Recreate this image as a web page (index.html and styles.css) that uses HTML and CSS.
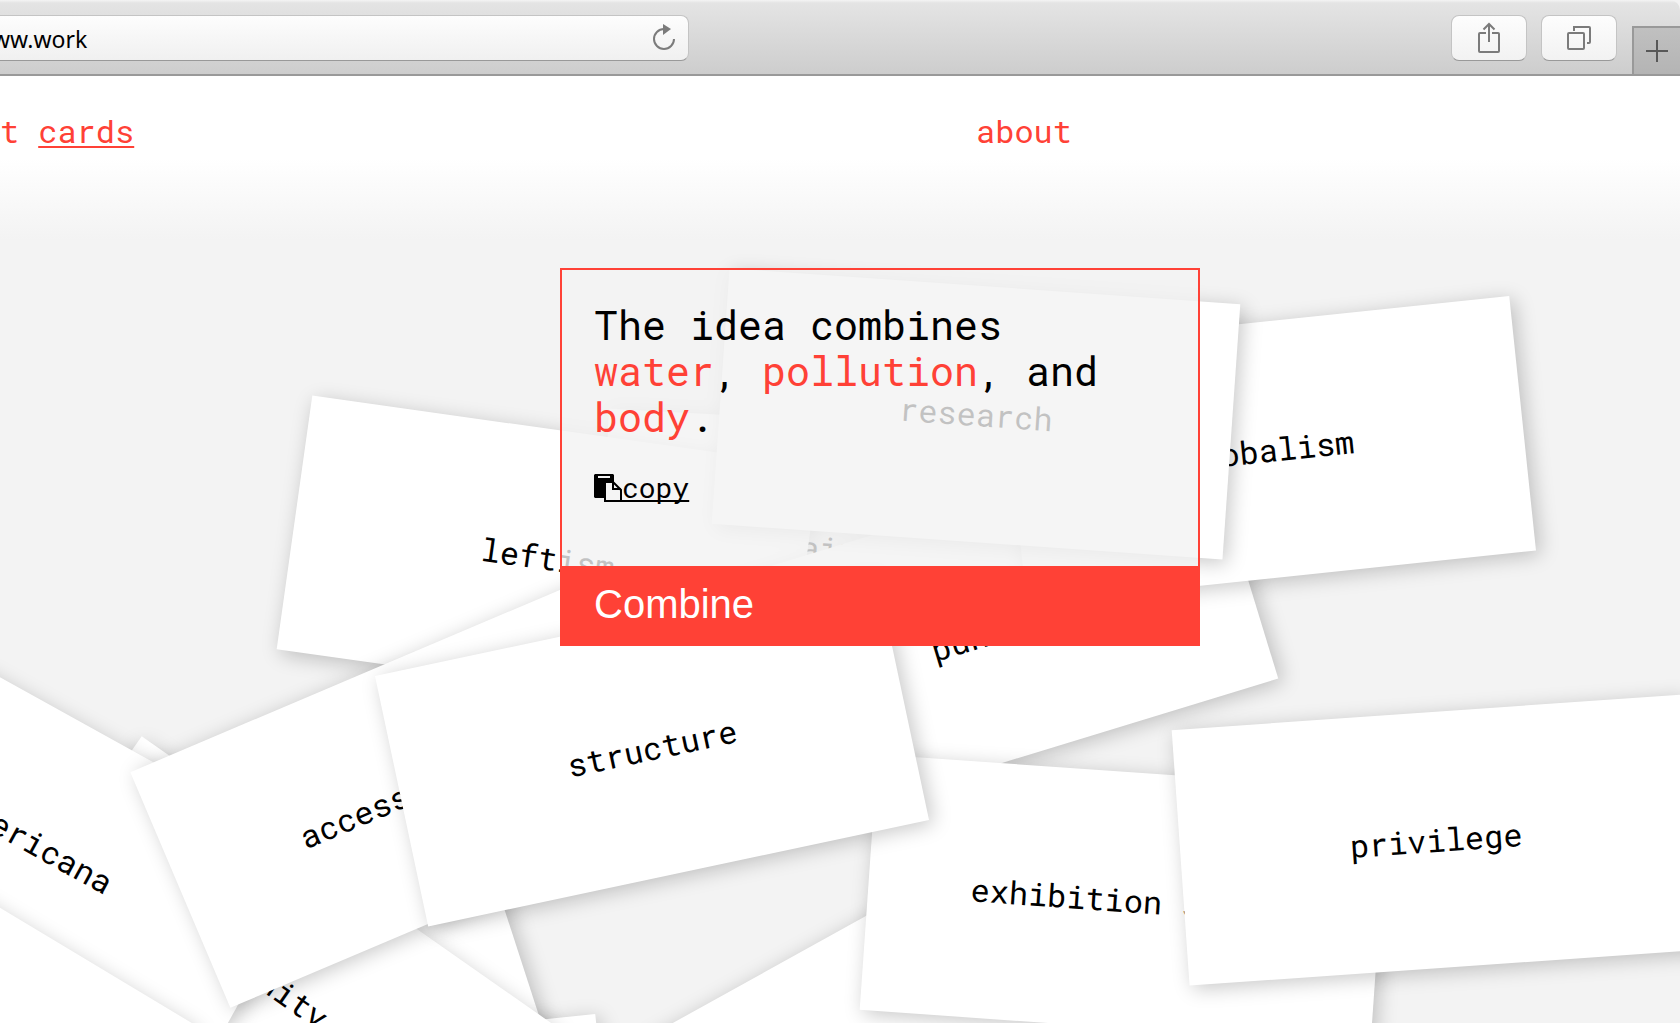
FILE: index.html
```html
<!DOCTYPE html>
<html lang="en">
<head>
<meta charset="utf-8">
<title>Cards</title>
<meta name="viewport" content="width=device-width, initial-scale=1">
<link rel="stylesheet" href="styles.css">
</head>
<body>
<div class="toolbar">
  <div class="address">
    <input class="address-input" type="text" value="ww.work" aria-label="Address">
    <button class="reload" type="button" aria-label="Reload">
      <svg width="24" height="28" viewBox="0 0 24 28" fill="none" stroke="#7b7b7b" stroke-width="2"><path d="M12 5A10 10 0 1 0 22 15"/><path d="M11 0V11L19 5Z" fill="#7b7b7b" stroke="none"/></svg>
    </button>
  </div>
  <div class="tools">
    <button class="tool" type="button" aria-label="Share">
      <svg width="24" height="32" viewBox="0 0 24 32" fill="none" stroke="#7b7b7b" stroke-width="2"><path d="M9 11H3Q2 11 2 12V29Q2 30 3 30H21Q22 30 22 29V12Q22 11 21 11H15"/><path d="M12 20V2M6.500 7.500L12 2L17.500 7.500"/></svg>
    </button>
    <button class="tool" type="button" aria-label="Show all tabs">
      <svg width="26" height="26" viewBox="0 0 26 26" fill="none" stroke="#7b7b7b" stroke-width="2"><rect x="2" y="8" width="16" height="16" rx="1"/><path d="M8 6V2H23Q24 2 24 3V17Q24 18 23 18H21"/></svg>
    </button>
  </div>
  <button class="new-tab" type="button" aria-label="New tab">
    <svg width="22" height="22" viewBox="0 0 22 22" stroke="#585858" stroke-width="2"><path d="M11 0V22M0 11H22"/></svg>
  </button>
</div>
<header class="site-header">
  <nav class="nav">
    <a class="nav-link" href="#print">t</a>
    <a class="nav-link nav-link-current" href="#cards">cards</a>
  </nav>
  <nav class="nav">
    <a class="nav-link" href="#about">about</a>
  </nav>
</header>
<main class="board">
  <div class="card card-painting">painting</div>
  <div class="card card-leftism">leftism</div>
  <div class="card card-blank-left"></div>
  <div class="card card-blank-bottom"></div>
  <div class="card card-vanity">vanity</div>
  <div class="card card-americana">Americana</div>
  <div class="card card-blank-corner"></div>
  <div class="card card-blank-right"></div>
  <div class="card card-punctum">punctum</div>
  <div class="card card-globalism">globalism</div>
  <div class="card card-research">research</div>
  <div class="card card-accessibility">accessibility</div>
  <div class="card card-exhibition">exhibition space</div>
  <div class="card card-structure">structure</div>
  <div class="card card-privilege">privilege</div>
  <section class="panel">
    <div class="panel-body">
      <p class="idea">The idea combines <em>water</em>, <em>pollution</em>, and <em>body</em>.</p>
      <a class="copy" href="#copy"><svg width="28" height="28" viewBox="0 0 28 28"><path d="M1 0H19L20 1V8H12V24H1L0 23V1Z"/><rect x="4" y="2" width="12" height="2" fill="#f4f4f4"/><path d="M11 8H19L27 16V27H11Z" fill="#f5f5f5" stroke="#000" stroke-width="2"/><path d="M19 8V15H27" fill="none" stroke="#000" stroke-width="2"/></svg><span>copy</span></a>
    </div>
    <button class="combine" type="button">Combine</button>
  </section>
</main>
</body>
</html>
```
FILE: styles.css
```css
* {
  box-sizing: border-box;
}

body {
  margin: 0;
  min-height: 100vh;
  display: flex;
  flex-direction: column;
  background: #f3f3f3;
  color: #000;
  font-family: "Roboto Mono", "Liberation Mono", monospace;
  font-size: 32px;
}

button {
  font: inherit;
  padding: 0;
  border: 0;
  cursor: pointer;
}

/* Browser toolbar */

.toolbar {
  display: flex;
  align-items: flex-start;
  height: 76px;
  border-bottom: 2px solid #999;
  border-top-right-radius: 10px;
  background: linear-gradient(#f4f4f4, #e4e4e4 3px, #cdcdcd);
}

.address {
  display: flex;
  align-items: center;
  width: 41%;
  height: 46px;
  margin-top: 15px;
  padding-right: 12px;
  border: 1px solid #c4c4c4;
  border-left: 0;
  border-bottom-color: #999;
  border-radius: 0 8px 8px 0;
  background: linear-gradient(#fdfdfd, #f0f0f0);
}

.address-input {
  flex: 1;
  min-width: 0;
  height: 40px;
  margin-left: -8px;
  padding: 2px 0 0;
  border: 0;
  outline: 0;
  background: none;
  color: #000;
  font: 23px "Noto Sans", sans-serif;
}

.reload {
  display: flex;
  background: none;
}

.tools {
  display: flex;
  gap: 14px;
  margin: 15px 15px 0 auto;
}

.tool {
  display: flex;
  align-items: center;
  justify-content: center;
  width: 76px;
  height: 46px;
  border: 1px solid #c4c4c4;
  border-bottom-color: #999;
  border-radius: 8px;
  background: linear-gradient(#fdfdfd, #f2f2f2);
}

.new-tab {
  display: flex;
  align-items: center;
  justify-content: center;
  align-self: flex-end;
  width: 48px;
  height: 48px;
  border: solid #999;
  border-width: 2px 0 0 2px;
  background: linear-gradient(#c0c0c0, #b4b4b4);
}

/* Page header */

.site-header {
  display: grid;
  grid-template-columns: 976px 1fr;
  height: 164px;
  padding-top: 35px;
  background: linear-gradient(#fff 50%, #f3f3f3);
}

.nav {
  display: flex;
  align-items: flex-start;
  gap: 19px;
}

.nav-link {
  color: #ff4136;
  line-height: 40px;
  text-decoration: none;
}

.nav-link-current {
  text-decoration: underline;
  text-decoration-thickness: 2px;
  text-decoration-skip-ink: none;
  text-underline-offset: 3px;
}

/* Card board: each card is placed by its centre, then turned */

.board {
  position: relative;
  flex: 1;
  overflow: hidden;
}

.card {
  position: absolute;
  display: flex;
  align-items: center;
  justify-content: center;
  width: 512px;
  height: 256px;
  margin: -128px 0 0 -256px;
  padding-bottom: 2px;
  background: #fff;
  box-shadow: 4px 4px 20px rgba(0, 0, 0, 0.22);
}

.card-painting { left: 858px; top: 310px; transform: rotate(3deg); }
.card-leftism { left: 548px; top: 318px; transform: rotate(8deg); }
.card-blank-left { left: 266px; top: 764px; transform: rotate(-18deg); }
.card-blank-bottom { left: 354px; top: 928px; transform: rotate(-6deg); }
.card-vanity { left: 278px; top: 748px; transform: rotate(35deg); }
.card-americana { left: 35px; top: 603px; transform: rotate(29deg); }
.card-blank-corner { left: -85px; top: 766px; transform: rotate(31deg); }
.card-blank-right { left: 926px; top: 789px; transform: rotate(-29deg); }
.card-punctum { left: 996px; top: 391px; transform: rotate(-17deg); }
.card-globalism { left: 1268px; top: 210px; transform: rotate(-6deg); }
.card-research { left: 976px; top: 174px; transform: rotate(4deg); }
.card-accessibility { left: 416px; top: 550px; transform: rotate(-23deg); }
.card-exhibition { left: 1124px; top: 660px; transform: rotate(4deg); }
.card-structure { left: 652px; top: 508px; transform: rotate(-12deg); }
.card-privilege { left: 1436px; top: 600px; transform: rotate(-4deg); }

/* Idea panel, floating over the cards */

.panel {
  position: absolute;
  left: 560px;
  top: 28px;
  width: 640px;
}

.panel-body {
  display: flex;
  flex-direction: column;
  align-items: flex-start;
  gap: 30px;
  height: 298px;
  padding: 32px 32px 0;
  border: 2px solid #ff4136;
  border-bottom: 0;
  background: rgba(243, 243, 243, 0.8);
}

.idea {
  margin: 0;
  font-size: 40px;
  line-height: 46px;
}

.idea em {
  color: #ff4136;
  font-style: normal;
}

.copy {
  display: flex;
  align-items: center;
  color: #000;
  font-size: 28px;
  line-height: 36px;
  text-decoration: underline;
  text-decoration-thickness: 2px;
  text-decoration-skip-ink: none;
  text-underline-offset: 2px;
}

.combine {
  display: block;
  width: 100%;
  height: 80px;
  padding: 0 34px 4px;
  background: #ff4136;
  color: #fff;
  font: 40px "Liberation Sans", sans-serif;
  text-align: left;
}
```
